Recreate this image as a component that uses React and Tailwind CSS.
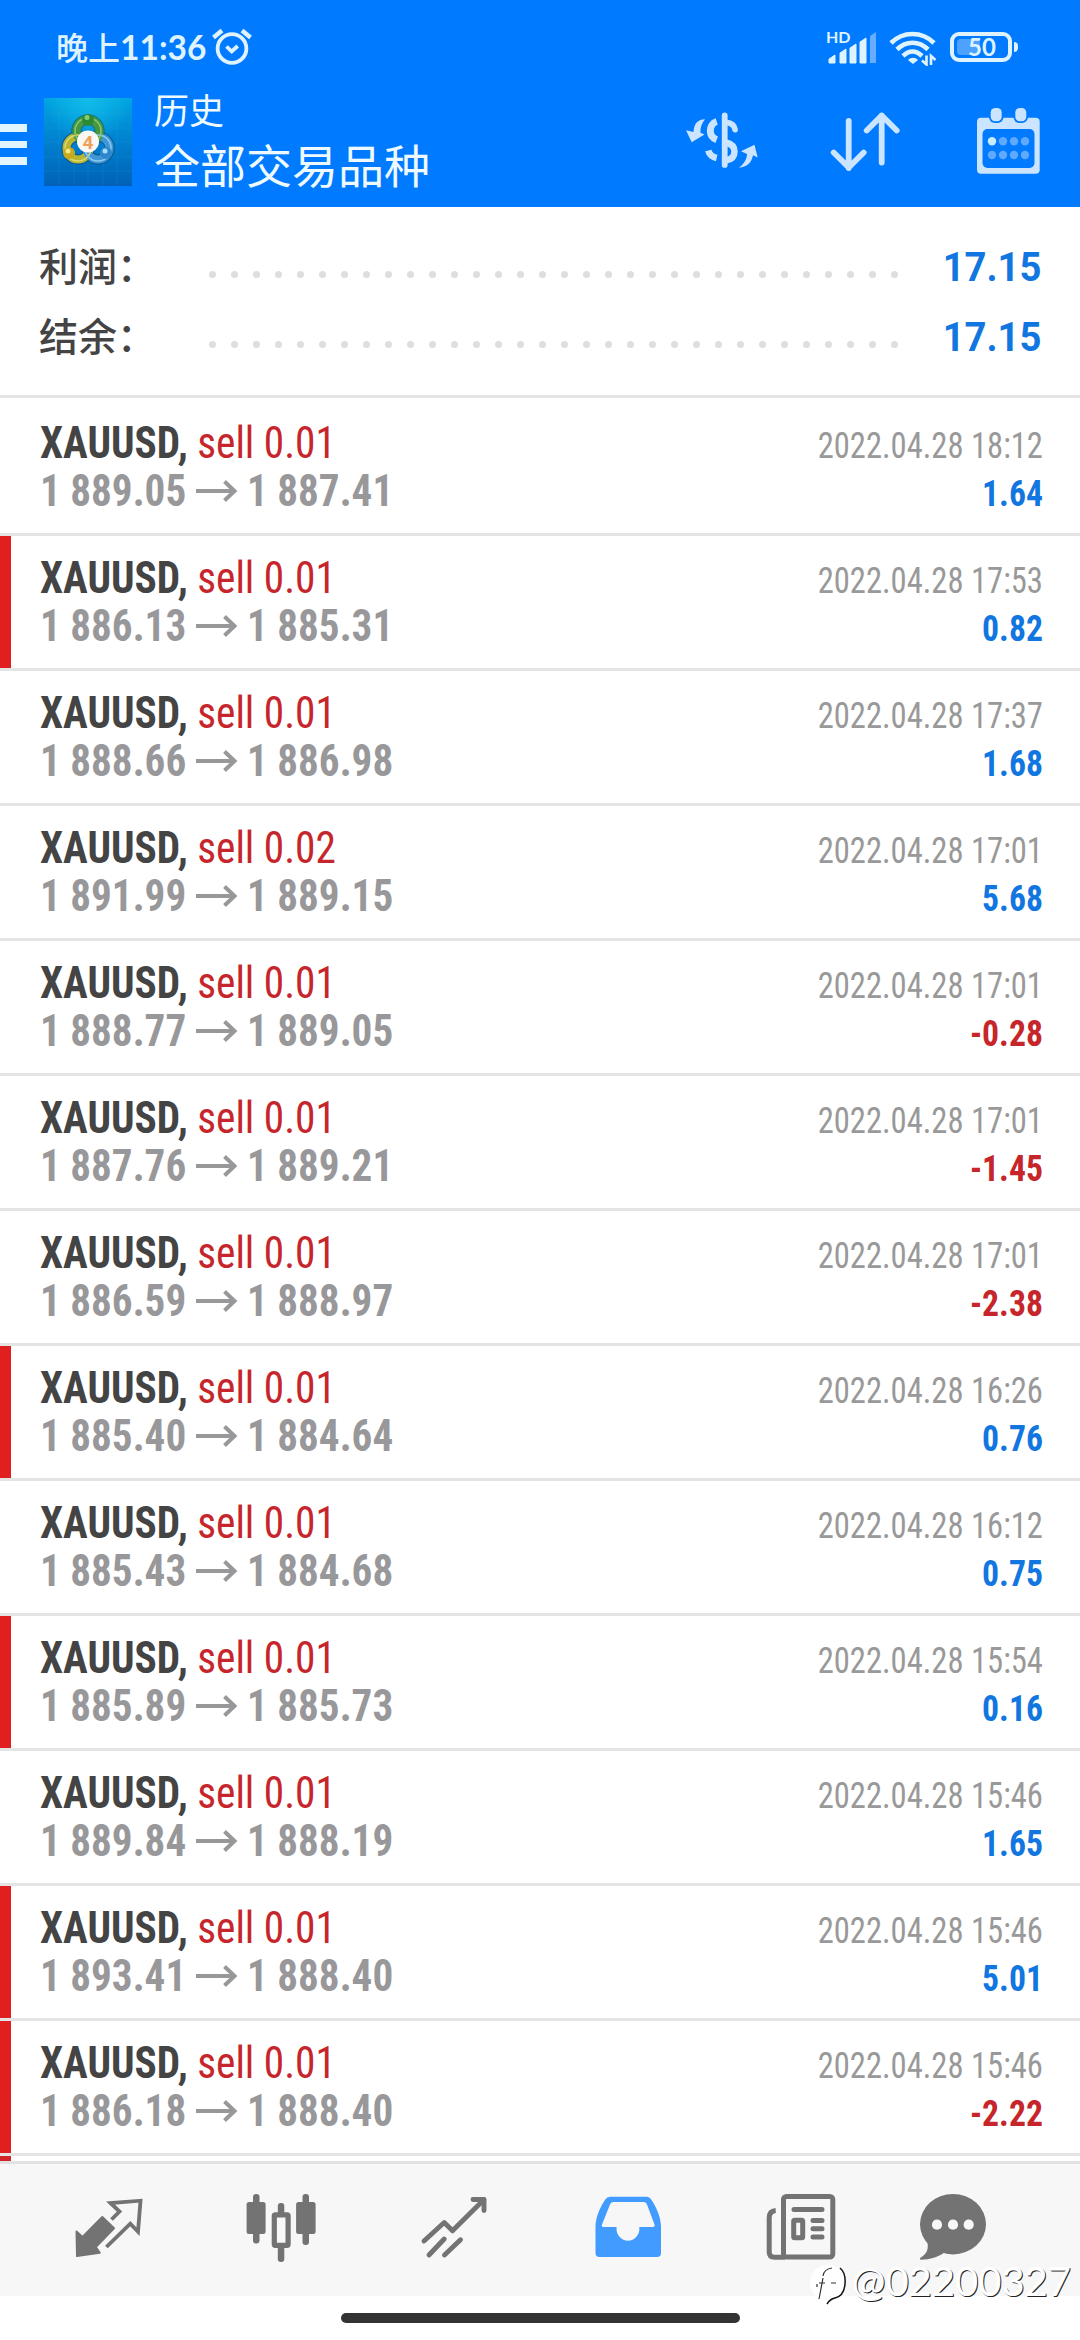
import React from 'react';

const trades = [
  { volume: '0.01', open: '1 889.05', close: '1 887.41', time: '2022.04.28 18:12', profit: '1.64' },
  { volume: '0.01', open: '1 886.13', close: '1 885.31', time: '2022.04.28 17:53', profit: '0.82', marked: true },
  { volume: '0.01', open: '1 888.66', close: '1 886.98', time: '2022.04.28 17:37', profit: '1.68' },
  { volume: '0.02', open: '1 891.99', close: '1 889.15', time: '2022.04.28 17:01', profit: '5.68' },
  { volume: '0.01', open: '1 888.77', close: '1 889.05', time: '2022.04.28 17:01', profit: '-0.28' },
  { volume: '0.01', open: '1 887.76', close: '1 889.21', time: '2022.04.28 17:01', profit: '-1.45' },
  { volume: '0.01', open: '1 886.59', close: '1 888.97', time: '2022.04.28 17:01', profit: '-2.38' },
  { volume: '0.01', open: '1 885.40', close: '1 884.64', time: '2022.04.28 16:26', profit: '0.76', marked: true },
  { volume: '0.01', open: '1 885.43', close: '1 884.68', time: '2022.04.28 16:12', profit: '0.75' },
  { volume: '0.01', open: '1 885.89', close: '1 885.73', time: '2022.04.28 15:54', profit: '0.16', marked: true },
  { volume: '0.01', open: '1 889.84', close: '1 888.19', time: '2022.04.28 15:46', profit: '1.65' },
  { volume: '0.01', open: '1 893.41', close: '1 888.40', time: '2022.04.28 15:46', profit: '5.01', marked: true },
  { volume: '0.01', open: '1 886.18', close: '1 888.40', time: '2022.04.28 15:46', profit: '-2.22', marked: true },
];

const AlarmIcon = () => (
  <svg width="40" height="38" viewBox="0 0 40 38" fill="none" stroke="#dff3ff" strokeWidth="3.8">
    <circle cx="20" cy="20.5" r="14.4" />
    <path d="M14.5 18.5l5.2 5 6-5.5" />
    <path d="M1.5 9.5L10 2.5M38.5 9.5L30 2.5" strokeWidth="4.4" />
  </svg>
);

const SignalIcon = () => (
  <svg width="52" height="34" viewBox="0 0 52 34" fill="#dff3ff" className="overflow-visible">
    <text x="0" y="13" fontSize="16" fontWeight="700" fontFamily="Lato">HD</text>
    <path d="M3 33v-4l6-4v8zM14 33V23l6-4v14zM24 33V18l6-4v19zM34 33V12l6-4v25z" stroke="#dff3ff" strokeLinejoin="round" />
    <path d="M44 33V6l6-4v31z" fill="#66adff" />
  </svg>
);

const WifiIcon = () => (
  <svg width="48" height="36" viewBox="0 0 48 36" fill="none" stroke="#dff3ff" strokeWidth="4.6">
    <path d="M2 13C14 1 33 1 45 13" />
    <path d="M8 19.5c9-9 22-9 31 0" />
    <path d="M14 26c6-6 13-6 19 0" />
    <path d="M19 30c3-3 7-3 10 0l-5 4z" fill="#dff3ff" stroke="none" />
    <path d="M37.500 25.500v9l-4.500-4M42 35v-9l4.500 4" strokeWidth="2.6" />
  </svg>
);

const CurrencyIcon = () => (
  <svg width="80" height="60" viewBox="0 0 80 60" fill="none" stroke="#cbe4ff" strokeWidth="5.8">
    <path d="M42.700 5.500v49.400" strokeLinecap="round" />
    <path d="M34.700 11.500C30 13 28.300 17.500 28.300 21s2 7 6.400 8.700" strokeWidth="7" />
    <path d="M44 12.300c5 .5 8.500 3 9 7.200" strokeLinecap="round" />
    <path d="M44 32.500c6 1.500 8.500 4.500 8.500 9 0 4.700-2.500 8-8.500 9" strokeWidth="6.500" />
    <path d="M26.300 40.500c1 4 4 6.500 8.400 7.500" strokeWidth="6.500" />
    <path d="M23 9.300C15 9.800 12 14 11.500 22L4 20.300l5.700 12 12.800-7.800-4-1.800C18 17.500 20 13 23 9.300z" fill="#cbe4ff" stroke="none" />
    <path d="M57 57.700c8-1 12-4 14-12.500l4.700 2.300-3.200-12.800L59 41.300l6 2.700c0 5-3 10-8 13.700z" fill="#cbe4ff" stroke="none" />
  </svg>
);

const SortIcon = () => (
  <svg width="80" height="64" viewBox="0 0 80 64" fill="none" stroke="#cbe4ff" strokeWidth="5.8" strokeLinecap="round" strokeLinejoin="round">
    <path d="M22.700 12v47M7.700 43.500l15 15 15-15" />
    <path d="M55.700 53.500V6.500M40.700 21.500l15-15 15 15" />
  </svg>
);

const CalendarIcon = () => (
  <svg width="72" height="72" viewBox="0 0 72 72" fill="#cbe4ff">
    <rect x="5" y="13.700" width="62.700" height="56" rx="4" />
    <rect x="10.500" y="25" width="52" height="39" rx="5" fill="#007aff" />
    <rect x="17" y="2" width="14.500" height="17" rx="6" fill="#007aff" />
    <rect x="41.500" y="2" width="14.500" height="17" rx="6" fill="#007aff" />
    <rect x="18.700" y="4" width="11" height="13.300" rx="4.500" />
    <rect x="43.300" y="4" width="11" height="13.300" rx="4.500" />
    {[37.3, 51].map(cy => [20, 31, 42, 53].map(cx => (
      <circle key={`${cx}-${cy}`} cx={cx} cy={cy} r="4.200" fill={cx === 20 && cy < 40 ? '#c8edff' : '#5fa9ff'} />
    )))}
  </svg>
);

const AppLogo = () => (
  <svg width="88" height="88" viewBox="0 0 88 88">
    <defs>
      <linearGradient id="logoBg" x1="0" y1="0" x2="0" y2="1">
        <stop offset="0" stopColor="#00a4e0" />
        <stop offset=".5" stopColor="#0080cf" />
        <stop offset="1" stopColor="#0061b4" />
      </linearGradient>
      <radialGradient id="logoGlow" cx=".5" cy="0" r=".5">
        <stop offset="0" stopColor="#12bcea" />
        <stop offset="1" stopColor="#12bcea" stopOpacity="0" />
      </radialGradient>
    </defs>
    <rect width="88" height="88" fill="url(#logoBg)" />
    <rect width="88" height="88" fill="url(#logoGlow)" />
    <path d="M15 0v88M30 0v88M44 0v88M59 0v88M73 0v88M0 15h88M0 30h88M0 44h88M0 59h88M0 73h88" stroke="#3cb5ee" strokeOpacity=".15" />
    <g fill="none" strokeWidth="8">
      <circle cx="34" cy="50" r="11.500" stroke="#12406a" strokeWidth="10.500" opacity=".5" />
      <circle cx="54" cy="50" r="11.500" stroke="#12406a" strokeWidth="10.500" opacity=".5" />
      <circle cx="44" cy="33" r="11.500" stroke="#1f5b4a" strokeWidth="10.500" opacity=".6" />
      <circle cx="34" cy="50" r="11.500" stroke="#b9b632" />
      <circle cx="54" cy="50" r="11.500" stroke="#4196d6" />
      <circle cx="44" cy="33" r="11.500" stroke="#45983f" />
      <circle cx="34" cy="50" r="13" stroke="#dcd870" strokeWidth="1.500" />
      <circle cx="54" cy="50" r="13" stroke="#8ccbf0" strokeWidth="1.500" />
      <circle cx="44" cy="33" r="13" stroke="#8cc673" strokeWidth="1.500" />
    </g>
    <circle cx="44" cy="22" r="6" fill="#2c8a35" />
    <circle cx="43" cy="19.500" r="2.500" fill="#86cc72" />
    <circle cx="25" cy="55" r="6" fill="#c9a91d" />
    <circle cx="24" cy="53" r="2.500" fill="#f2e88a" />
    <circle cx="62" cy="55" r="6" fill="#2e86cb" />
    <circle cx="61" cy="53" r="2.500" fill="#a5dcfb" />
    <circle cx="44" cy="43.500" r="11" fill="#fbf7f3" />
    <text x="44" y="50.500" fontSize="19" fontWeight="700" fontFamily="Roboto" fill="#f0a05a" textAnchor="middle">4</text>
  </svg>
);

const ArrowIcon = () => (
  <svg width="42" height="24" viewBox="0 0 42 24" fill="none" stroke="#98989b" strokeWidth="4">
    <path d="M0 12h38M28.500 2.500l10 9.500-10 9.500" />
  </svg>
);

const QuotesIcon = () => (
  <svg width="80" height="80" viewBox="0 0 80 80">
    <path d="M8.500 43.500l6 5.500 19.800-20L46 40.300 27.800 59l4 5.800L9 68z" fill="#737373" stroke="#737373" strokeWidth="2" strokeLinejoin="round" />
    <path d="M43.500 31.500l8-8-9-8.500 30-2.300L70 43.700l-7.700-8L38.400 59" fill="none" stroke="#737373" strokeWidth="3.800" />
  </svg>
);

const CandlesIcon = () => (
  <svg width="80" height="80" viewBox="0 0 80 80" fill="#737373">
    <rect x="12" y="6" width="6.500" height="49.500" rx="3" />
    <rect x="5.600" y="14" width="19" height="32" rx="2.500" />
    <rect x="36.800" y="15" width="6.500" height="59" rx="3" />
    <rect x="33.300" y="26.800" width="13.800" height="30.500" rx="1" fill="#f7f7f7" stroke="#737373" strokeWidth="5.200" />
    <rect x="61.500" y="6" width="6.500" height="51" rx="3" />
    <rect x="55.100" y="14" width="19.500" height="32" rx="2.500" />
  </svg>
);

const ChartIcon = () => (
  <svg width="80" height="80" viewBox="0 0 80 80" fill="none" stroke="#737373" strokeWidth="4.900" strokeLinecap="round" strokeLinejoin="round">
    <path d="M10 53l20.200-18.500 8.300 8.200 31.300-31" />
    <path d="M59 11.500h11v11" />
    <path d="M30.200 51L15 67M46.500 51.800L30.500 67" />
  </svg>
);

const TrayIcon = () => (
  <svg width="80" height="80" viewBox="0 0 80 80" fill="#429bff">
    <path fillRule="evenodd" d="M22 8.700h37q2.500 0 4 2.500C69 20 73 30 73 39v26q0 4-4 4H11.500q-4 0-4-4V39C7.500 30 11.500 20 17.500 11.200q1.500-2.500 4.500-2.500zM25.500 14q-2.500 0-3.300 2L14 36.500q-.8 2.500 1.500 2.500h13.100c-1 8 5 13.700 11.400 13.700S52.300 47 51.300 39H65q2 0 1.500-2.500L58.800 16q-.8-2-3.300-2z" />
  </svg>
);

const NewsIcon = () => (
  <svg width="80" height="80" viewBox="0 0 80 80" fill="none" stroke="#737373" strokeWidth="5">
    <path d="M14.700 22.500Q8.200 23 8.200 30v34q0 5.200 5.200 5.200H24" />
    <rect x="22.500" y="8.500" width="49.300" height="60.600" rx="3" />
    <path d="M33 21.500h28M52 32.400h9M52 40.700h9M52 49h9" strokeLinecap="round" />
    <rect x="32.700" y="32.200" width="9" height="17.500" rx="1" />
  </svg>
);

const ChatIcon = () => (
  <svg width="80" height="80" viewBox="0 0 80 80" fill="#737373">
    <ellipse cx="40" cy="36.200" rx="33" ry="30.200" />
    <path d="M14.500 55C16 63 12 67 7.200 70c-.5 1 0 1.800 1 1.800 9 0 17-3 23-7z" />
    <g fill="#f7f7f7">
      <circle cx="24" cy="36.700" r="5.100" />
      <circle cx="40" cy="36.700" r="5.100" />
      <circle cx="55.700" cy="36.700" r="5.100" />
    </g>
  </svg>
);

const StatusBar = () => (
  <div className="flex h-[94px] items-start justify-between pl-[56px] pr-[62px] text-[#dff3ff]">
    <div className="flex pt-[28px]">
      <span className="w-[156px] whitespace-nowrap font-['Lato','Noto_Sans_CJK_SC',sans-serif] text-[32px] font-medium leading-[38px]">
        晚上<span className="text-[33.500px] font-bold">11:36</span>
      </span>
      <AlarmIcon />
    </div>
    <div className="flex pt-[30px]">
      <SignalIcon />
      <div className="ml-[11px]"><WifiIcon /></div>
      <div className="ml-[13px] flex items-center gap-[2px] self-start pt-[2px]">
        <div className="relative flex h-[30px] w-[62px] items-center justify-center rounded-[9px] border-4 border-[#dff3ff]">
          <div className="absolute left-[3px] top-[3px] h-4 w-[23px] rounded-[4px] bg-[#4da2ff]" />
          <span className="relative ml-[2px] font-['Lato',sans-serif] text-[24px] font-bold leading-none">50</span>
        </div>
        <div className="h-[10px] w-[4px] rounded-r-full bg-[#dff3ff]" />
      </div>
    </div>
  </div>
);

const Header = () => (
  <header className="h-[207px] shrink-0 bg-[#007aff]">
    <StatusBar />
    <div className="flex">
      <div className="flex w-[27px] flex-col gap-[9px] pt-[30px]">
        <div className="h-[7.500px] bg-[#e2f5ff]" />
        <div className="h-[7.500px] bg-[#e2f5ff]" />
        <div className="h-[7.500px] bg-[#e2f5ff]" />
      </div>
      <div className="ml-[17px] pt-1"><AppLogo /></div>
      <div className="ml-[22px] w-[528px] font-['Noto_Sans_CJK_SC',sans-serif] text-[#eefaff]">
        <div className="-mt-[4px] text-[35px] leading-[38px]">历史</div>
        <div className="mt-[7px] text-[46px] leading-[56px]">全部交易品种</div>
      </div>
      <div className="pt-4"><CurrencyIcon /></div>
      <div className="ml-[64px] pt-[15px]"><SortIcon /></div>
      <div className="ml-[66px] pt-[10px]"><CalendarIcon /></div>
    </div>
  </header>
);

const SummaryRow = ({ label, value }) => (
  <div className="flex h-[70px] items-center">
    <div className="-mt-[6px] w-[170px] whitespace-nowrap font-['Noto_Sans_CJK_SC',sans-serif] text-[39px] font-medium text-[#444]">{label}</div>
    <div className="mt-[14px] flex w-[689px] justify-between">
      {Array.from({ length: 32 }, (_, i) => (
        <div key={i} className="size-[7px] rounded-full bg-[#dedede]" />
      ))}
    </div>
    <div className="ml-auto mt-[2px] origin-right scale-x-[0.955] font-['Roboto',sans-serif] text-[40px] font-bold text-[#1276e0]">{value}</div>
  </div>
);

const TradeRow = ({ trade }) => (
  <div className="flex h-[135px] shrink-0 border-b-[3px] border-[#e4e4e4] font-['Roboto_Condensed','Roboto',sans-serif] [font-stretch:75%]">
    <div className={`w-[11px] ${trade.marked ? 'bg-[#e02020]' : ''}`} />
    <div className="flex flex-1 justify-between whitespace-nowrap pl-[29px] pr-[37px] pt-[18px]">
      <div className="text-[44px] leading-[48px]">
        <div className="origin-left scale-x-[0.938] text-[#c6262b]">
          <span className="font-bold text-[#444]">XAUUSD,</span> sell {trade.volume}
        </div>
        <div className="flex items-center font-bold text-[#98989b]">
          <div className="w-[156px]"><div className="origin-left scale-x-[0.935]">{trade.open}</div></div>
          <ArrowIcon />
          <div className="ml-[9px]"><div className="origin-left scale-x-[0.935]">{trade.close}</div></div>
        </div>
      </div>
      <div className="pt-[3px] text-right text-[36px] leading-[48px]">
        <div className="origin-right scale-x-[0.905] text-[#999]">{trade.time}</div>
        <div className={`origin-right scale-x-[0.935] font-bold ${trade.profit.startsWith('-') ? 'text-[#c6262b]' : 'text-[#1276e0]'}`}>{trade.profit}</div>
      </div>
    </div>
  </div>
);

const BottomNav = () => (
  <nav className="flex h-[135px] shrink-0 border-t-[3px] border-[#e2e2e2] bg-[#f7f7f7] pl-[21.500px] pt-[24px] [&>div]:flex [&>div]:w-[173.200px] [&>div]:justify-center">
    <div><QuotesIcon /></div>
    <div><CandlesIcon /></div>
    <div><ChartIcon /></div>
    <div><TrayIcon /></div>
    <div><NewsIcon /></div>
    <div className="ml-[-21px]"><ChatIcon /></div>
  </nav>
);

// user tag stamped over the bottom right corner
const Watermark = () => (
  <div className="absolute bottom-[34px] right-[9px] flex items-center text-white">
    <svg width="40" height="44" viewBox="0 0 40 44">
      <circle cx="19" cy="21" r="18" fill="#fff" />
      <path d="M10 37l4-21M8 22v3M14 14q1-7 9-8M10 21h6M22 21h5" fill="none" stroke="#333" strokeWidth="1.200" />
      <path d="M31 6q6 5 5 16-1 12-10 14-5 1-8 6" fill="none" stroke="#111" strokeWidth="1.500" />
    </svg>
    <span className="-mt-[6px] ml-[3px] font-['Lato',sans-serif] text-[40px] leading-[50px] [text-shadow:1px_1px_0.500px_#222]">@02200327</span>
  </div>
);

const App = () => {
  return (
    <div className="relative flex h-[2340px] w-[1080px] flex-col overflow-hidden bg-white">
      <Header />
      <section className="h-[191px] shrink-0 border-b-[3px] border-[#e4e4e4] pl-[39px] pr-[39px] pt-[25px]">
        <SummaryRow label="利润：" value="17.15" />
        <SummaryRow label="结余：" value="17.15" />
      </section>
      <main className="flex h-[1763px] shrink-0 flex-col overflow-hidden pt-[3px]">
        {trades.map((trade, i) => (
          <TradeRow key={i} trade={trade} />
        ))}
        <div className="h-[135px] w-[11px] shrink-0 bg-[#d02428]" />
      </main>
      <BottomNav />
      <div className="mx-auto mt-[17px] h-[10px] w-[399px] rounded-full bg-[#333]" />
      <Watermark />
    </div>
  );
};

export default App;
